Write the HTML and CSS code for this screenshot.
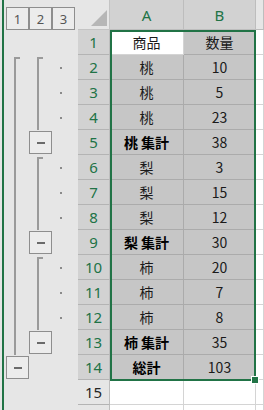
FILE: index.html
```html
<!DOCTYPE html>
<html lang="ja">
<head>
<meta charset="utf-8">
<link rel="stylesheet" href="styles.css">
</head>
<body>
<div class="app">
  <div class="toprow">
    <div class="levels"><span class="lvl">1</span><span class="lvl">2</span><span class="lvl">3</span></div>
    <div class="corner"><span class="tri"></span></div>
    <div class="colhead sel wa">A</div>
    <div class="colhead sel wb">B</div>
    <div class="colhead wc"></div>
  </div>
  <div class="grid">
    <div class="row">
      <div class="outline"><span class="slot"></span><span class="slot"></span><span class="slot"></span></div>
      <div class="rowhead sel">1</div>
      <div class="cell wa active">商品</div>
      <div class="cell wb sel">数量</div>
      <div class="cell wc"></div>
    </div>
    <div class="row">
      <div class="outline"><span class="slot"><i class="br"></i></span><span class="slot"><i class="br"></i></span><span class="slot"><i class="dot"></i></span></div>
      <div class="rowhead sel">2</div>
      <div class="cell wa sel">桃</div>
      <div class="cell wb sel">10</div>
      <div class="cell wc"></div>
    </div>
    <div class="row">
      <div class="outline"><span class="slot"><i class="vl"></i></span><span class="slot"><i class="vl"></i></span><span class="slot"><i class="dot"></i></span></div>
      <div class="rowhead sel">3</div>
      <div class="cell wa sel">桃</div>
      <div class="cell wb sel">5</div>
      <div class="cell wc"></div>
    </div>
    <div class="row">
      <div class="outline"><span class="slot"><i class="vl"></i></span><span class="slot"><i class="vl"></i></span><span class="slot"><i class="dot"></i></span></div>
      <div class="rowhead sel">4</div>
      <div class="cell wa sel">桃</div>
      <div class="cell wb sel">23</div>
      <div class="cell wc"></div>
    </div>
    <div class="row">
      <div class="outline"><span class="slot"><i class="vl"></i></span><span class="slot"><i class="btn"></i></span><span class="slot"></span></div>
      <div class="rowhead sel">5</div>
      <div class="cell wa sel bold">桃 集計</div>
      <div class="cell wb sel">38</div>
      <div class="cell wc"></div>
    </div>
    <div class="row">
      <div class="outline"><span class="slot"><i class="vl"></i></span><span class="slot"><i class="br"></i></span><span class="slot"><i class="dot"></i></span></div>
      <div class="rowhead sel">6</div>
      <div class="cell wa sel">梨</div>
      <div class="cell wb sel">3</div>
      <div class="cell wc"></div>
    </div>
    <div class="row">
      <div class="outline"><span class="slot"><i class="vl"></i></span><span class="slot"><i class="vl"></i></span><span class="slot"><i class="dot"></i></span></div>
      <div class="rowhead sel">7</div>
      <div class="cell wa sel">梨</div>
      <div class="cell wb sel">15</div>
      <div class="cell wc"></div>
    </div>
    <div class="row">
      <div class="outline"><span class="slot"><i class="vl"></i></span><span class="slot"><i class="vl"></i></span><span class="slot"><i class="dot"></i></span></div>
      <div class="rowhead sel">8</div>
      <div class="cell wa sel">梨</div>
      <div class="cell wb sel">12</div>
      <div class="cell wc"></div>
    </div>
    <div class="row">
      <div class="outline"><span class="slot"><i class="vl"></i></span><span class="slot"><i class="btn"></i></span><span class="slot"></span></div>
      <div class="rowhead sel">9</div>
      <div class="cell wa sel bold">梨 集計</div>
      <div class="cell wb sel">30</div>
      <div class="cell wc"></div>
    </div>
    <div class="row">
      <div class="outline"><span class="slot"><i class="vl"></i></span><span class="slot"><i class="br"></i></span><span class="slot"><i class="dot"></i></span></div>
      <div class="rowhead sel">10</div>
      <div class="cell wa sel">柿</div>
      <div class="cell wb sel">20</div>
      <div class="cell wc"></div>
    </div>
    <div class="row">
      <div class="outline"><span class="slot"><i class="vl"></i></span><span class="slot"><i class="vl"></i></span><span class="slot"><i class="dot"></i></span></div>
      <div class="rowhead sel">11</div>
      <div class="cell wa sel">柿</div>
      <div class="cell wb sel">7</div>
      <div class="cell wc"></div>
    </div>
    <div class="row">
      <div class="outline"><span class="slot"><i class="vl"></i></span><span class="slot"><i class="vl"></i></span><span class="slot"><i class="dot"></i></span></div>
      <div class="rowhead sel">12</div>
      <div class="cell wa sel">柿</div>
      <div class="cell wb sel">8</div>
      <div class="cell wc"></div>
    </div>
    <div class="row">
      <div class="outline"><span class="slot"><i class="vl"></i></span><span class="slot"><i class="btn"></i></span><span class="slot"></span></div>
      <div class="rowhead sel">13</div>
      <div class="cell wa sel bold">柿 集計</div>
      <div class="cell wb sel">35</div>
      <div class="cell wc"></div>
    </div>
    <div class="row">
      <div class="outline"><span class="slot"><i class="btn"></i></span><span class="slot"></span><span class="slot"></span></div>
      <div class="rowhead sel">14</div>
      <div class="cell wa sel bold">総計</div>
      <div class="cell wb sel">103</div>
      <div class="cell wc"></div>
    </div>
    <div class="row">
      <div class="outline"><span class="slot"></span><span class="slot"></span><span class="slot"></span></div>
      <div class="rowhead">15</div>
      <div class="cell wa"></div>
      <div class="cell wb"></div>
      <div class="cell wc"></div>
    </div>
    <div class="row">
      <div class="outline"><span class="slot"></span><span class="slot"></span><span class="slot"></span></div>
      <div class="rowhead"></div>
      <div class="cell wa"></div>
      <div class="cell wb"></div>
      <div class="cell wc"></div>
    </div>
    <div class="selection"><span class="handle"></span></div>
  </div>
</div>
</body>
</html>
```

FILE: styles.css
```css
html, body {
  margin: 0;
  padding: 0;
  background: #e6e6e6;
  overflow: hidden;
}
.app {
  width: 264px;
  height: 410px;
  overflow: hidden;
  font-family: "Noto Sans CJK JP", "Noto Sans", sans-serif;
  position: relative;
}
.app::before {
  content: "";
  position: absolute;
  left: 2px;
  top: 0;
  width: 2px;
  height: 410px;
  background: #217346;
  z-index: 3;
}
.toprow {
  display: flex;
  height: 30px;
}
.levels {
  width: 78px;
  box-sizing: border-box;
  padding-left: 6px;
  display: flex;
  align-items: flex-end;
}
.lvl {
  width: 23px;
  height: 23px;
  box-sizing: border-box;
  border: 1px solid #8e8e8e;
  display: flex;
  align-items: center;
  justify-content: center;
  font-family: "Noto Sans", sans-serif;
  font-size: 13px;
  color: #555555;
  background: #ececec;
}
.corner {
  width: 32px;
  height: 30px;
  box-sizing: border-box;
  border-right: 1px solid #c4c4c4;
  border-bottom: 1px solid #c4c4c4;
  position: relative;
}
.tri {
  position: absolute;
  right: 2px;
  bottom: 3px;
  width: 0;
  height: 0;
  border-left: 16px solid transparent;
  border-bottom: 16px solid #b6b6b6;
}
.colhead {
  height: 30px;
  box-sizing: border-box;
  border-right: 1px solid #bdbdbd;
  border-bottom: 1px solid #bdbdbd;
  display: flex;
  align-items: center;
  justify-content: center;
  font-family: "Noto Sans", sans-serif;
  font-size: 15px;
  color: #262626;
  background: #e6e6e6;
}
.colhead.sel {
  background: #d2d2d2;
  color: #217346;
}
.wa { width: 74px; flex: none; }
.wb { width: 72px; flex: none; }
.wc { flex: 1; }
.grid {
  position: relative;
}
.row {
  display: flex;
  height: 25px;
}
.outline {
  width: 78px;
  flex: none;
  box-sizing: border-box;
  padding-left: 6px;
  display: flex;
}
.slot {
  width: 23px;
  height: 25px;
  display: flex;
  align-items: stretch;
  position: relative;
}
.vl {
  display: block;
  margin-left: 8px;
  width: 2px;
  background: #9a9a9a;
}
.br {
  display: block;
  margin-left: 8px;
  margin-top: 2px;
  width: 4px;
  border-left: 2px solid #9a9a9a;
  border-top: 2px solid #9a9a9a;
}
.dot {
  display: block;
  margin-left: 8px;
  width: 2px;
  height: 2px;
  align-self: center;
  background: #8a8a8a;
}
.btn {
  display: flex;
  align-items: center;
  justify-content: center;
  margin-top: 1px;
  width: 23px;
  height: 23px;
  box-sizing: border-box;
  border: 1px solid #8e8e8e;
  background: #ececec;
}
.btn::before {
  content: "";
  width: 8px;
  height: 2px;
  background: #6a6a6a;
}
.rowhead {
  width: 32px;
  flex: none;
  box-sizing: border-box;
  border-right: 1px solid #bdbdbd;
  border-bottom: 1px solid #b4b4b4;
  display: flex;
  align-items: center;
  justify-content: center;
  font-family: "Noto Sans", sans-serif;
  font-size: 15px;
  color: #262626;
  background: #e6e6e6;
}
.rowhead.sel {
  background: #d2d2d2;
  color: #217346;
}
.cell {
  height: 25px;
  box-sizing: border-box;
  border-right: 1px solid #d4d4d4;
  border-bottom: 1px solid #d4d4d4;
  background: #ffffff;
  display: flex;
  align-items: center;
  justify-content: center;
  font-size: 14px;
  color: #1a1a1a;
}
.cell.sel {
  background: #c6c6c6;
  border-right-color: #ababab;
  border-bottom-color: #ababab;
}
.cell.active {
  background: #ffffff;
}
.cell.bold {
  font-weight: bold;
  color: #000;
}
.selection {
  position: absolute;
  left: 110px;
  top: 0;
  width: 146px;
  height: 351px;
  box-sizing: border-box;
  border: 2px solid #217346;
  pointer-events: none;
}
.handle {
  position: absolute;
  right: -5px;
  bottom: -5px;
  width: 6px;
  height: 6px;
  background: #217346;
  border: 1px solid #ffffff;
}
```
